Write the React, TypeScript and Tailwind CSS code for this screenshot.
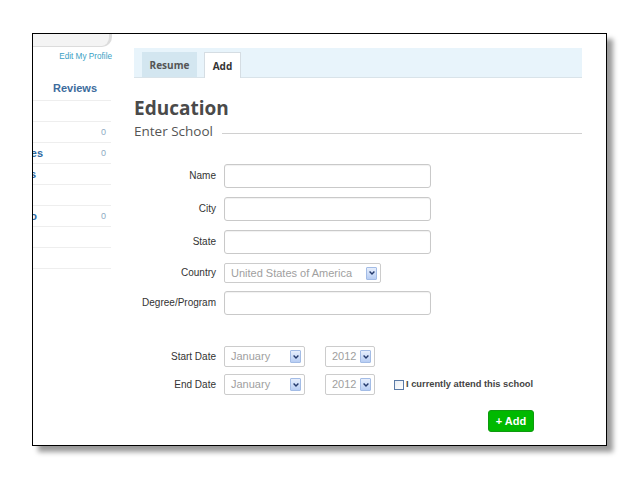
const sans = { fontFamily: '"Liberation Sans", Arial, sans-serif' };

type Row = { label?: string; labelClass?: string; count?: string };

const sideRows: Row[] = [
  {},
  { count: '0' },
  { label: 'Messages', labelClass: '-ml-[90px]', count: '0' },
  { label: 'Friends', labelClass: '-ml-[97px]' },
  {},
  { label: 'Photo', labelClass: '-ml-[96px]', count: '0' },
  {},
  {},
];

function Arrow() {
  return (
    <span className="flex h-[13px] w-[11px] items-center justify-center rounded-[1px] border border-[#a3bce6] bg-linear-to-b from-[#e6eefc] to-[#b7cdf3]">
      <svg width="6" height="4" viewBox="0 0 6 4">
        <path d="M0.6 0.6 L3 3 L5.4 0.6" stroke="#243a6c" strokeWidth="1.4" fill="none" />
      </svg>
    </span>
  );
}

function Select({ value, width }: { value: string; width: string }) {
  return (
    <div
      className={`flex h-[21px] items-center justify-between rounded-[2px] border border-[#cccccc] bg-white pl-[6px] pr-[3px] ${width}`}
    >
      <span className="text-[11px] leading-none text-[#a0a0a0]">{value}</span>
      <Arrow />
    </div>
  );
}

function Field({ label, children, className = '' }: { label: string; children: React.ReactNode; className?: string }) {
  return (
    <div className={`flex items-center gap-[8px] ${className}`}>
      <span className="w-[82px] text-right text-[10px] leading-none text-[#333]">{label}</span>
      {children}
    </div>
  );
}

function TextInput() {
  return (
    <input
      type="text"
      className="h-[24px] w-[207px] rounded-[3px] border border-[#c9c9c9] bg-white shadow-[inset_0_1px_1px_rgba(0,0,0,0.06)] outline-none"
    />
  );
}

export default function App() {
  return (
    <div className="h-[480px] w-[640px] overflow-hidden bg-white pt-[33px] pl-[32px]" style={sans}>
      <div className="flex h-[413px] w-[575px] overflow-hidden border border-black bg-white shadow-[6px_6px_5px_rgba(0,0,0,0.4)]">
        {/* sidebar */}
        <div className="w-[80px] shrink-0 overflow-hidden">
          <div className="h-[13px] w-[79px] rounded-br-[10px] border-r-[3px] border-b border-[#dcdcdc] bg-[#f4f4f4]" />
          <div className="flex h-[20px] items-center justify-end pr-[1px] text-[8.2px] leading-none text-[#3a9fc4]">
            Edit My Profile
          </div>
          <div className="flex h-[34px] w-[78px] items-end justify-end border-b border-[#eeeeee] pr-[14px] pb-[6px] text-[11px] leading-none font-bold text-[#3c6b9c]">
            Reviews
          </div>
          {sideRows.map((r, i) => (
            <div key={i} className="flex h-[21px] w-[78px] items-center border-b border-[#eeeeee]">
              {r.label && (
                <span className={`w-[100px] shrink-0 text-right text-[11px] leading-none font-bold text-[#2f6aa3] ${r.labelClass}`}>
                  {r.label}
                </span>
              )}
              {r.count && <span className="ml-auto pr-[5px] text-[9px] leading-none text-[#8eabc3]">{r.count}</span>}
            </div>
          ))}
        </div>

        {/* main */}
        <div className="ml-[21px] w-[448px] pt-[14px]">
          <div
            className="flex h-[30px] items-end gap-[7px] border-b border-[#d9e3e9] bg-[#e8f4fb] pl-[8px]"
            style={{ fontFamily: '"Open Sans", sans-serif' }}
          >
            <div className="flex h-[25px] w-[55px] items-center justify-center bg-[#d3e6f0] pt-[2px] text-[10px] font-bold text-[#555]">
              Resume
            </div>
            <div className="-mb-px flex h-[26px] w-[37px] items-center justify-center border border-b-0 border-[#d5dde3] bg-white pt-[2px] text-[10px] font-bold text-[#333]">
              Add
            </div>
          </div>

          <div style={{ fontFamily: '"Open Sans", sans-serif' }}>
            <h1 className="mt-[21px] text-[19px] leading-none font-bold text-[#4a4a4a]">Education</h1>
            <div className="mt-[7px] flex items-center gap-[9px]">
              <span className="text-[13.5px] leading-[13px] text-[#555]">Enter School</span>
              <span className="mt-[4px] h-px flex-1 bg-[#d0d0d0]" />
            </div>
          </div>

          <div className="mt-[26px]">
            <Field label="Name">
              <TextInput />
            </Field>
            <Field label="City" className="mt-[9px]">
              <TextInput />
            </Field>
            <Field label="State" className="mt-[9px]">
              <TextInput />
            </Field>
            <Field label="Country" className="mt-[9px]">
              <div className="flex h-[20px] w-[157px] items-center justify-between rounded-[2px] border border-[#cccccc] bg-white pl-[6px] pr-[3px]">
                <span className="text-[11px] leading-none text-[#a0a0a0]">United States of America</span>
                <Arrow />
              </div>
            </Field>
            <Field label="Degree/Program" className="mt-[8px]">
              <TextInput />
            </Field>
            <Field label="Start Date" className="mt-[31px]">
              <Select value="January" width="w-[81px]" />
              <div className="ml-[12px]">
                <Select value="2012" width="w-[50px]" />
              </div>
            </Field>
            <Field label="End Date" className="mt-[7px]">
              <Select value="January" width="w-[81px]" />
              <div className="ml-[12px]">
                <Select value="2012" width="w-[50px]" />
              </div>
              <div className="ml-[11px] flex items-center gap-[2px]">
                <span className="h-[10px] w-[10px] border border-[#5a7aa6] bg-linear-to-br from-[#e8edf3] to-white" />
                <span className="text-[9.3px] leading-none font-bold text-[#444]">I currently attend this school</span>
              </div>
            </Field>
            <div className="mt-[15px] flex">
              <button className="ml-[354px] flex h-[22px] w-[46px] items-center justify-center rounded-[3px] border border-[#0f9a0f] bg-[#00b900] text-[11px] font-bold text-white">
                + Add
              </button>
            </div>
          </div>
        </div>
      </div>
    </div>
  );
}
